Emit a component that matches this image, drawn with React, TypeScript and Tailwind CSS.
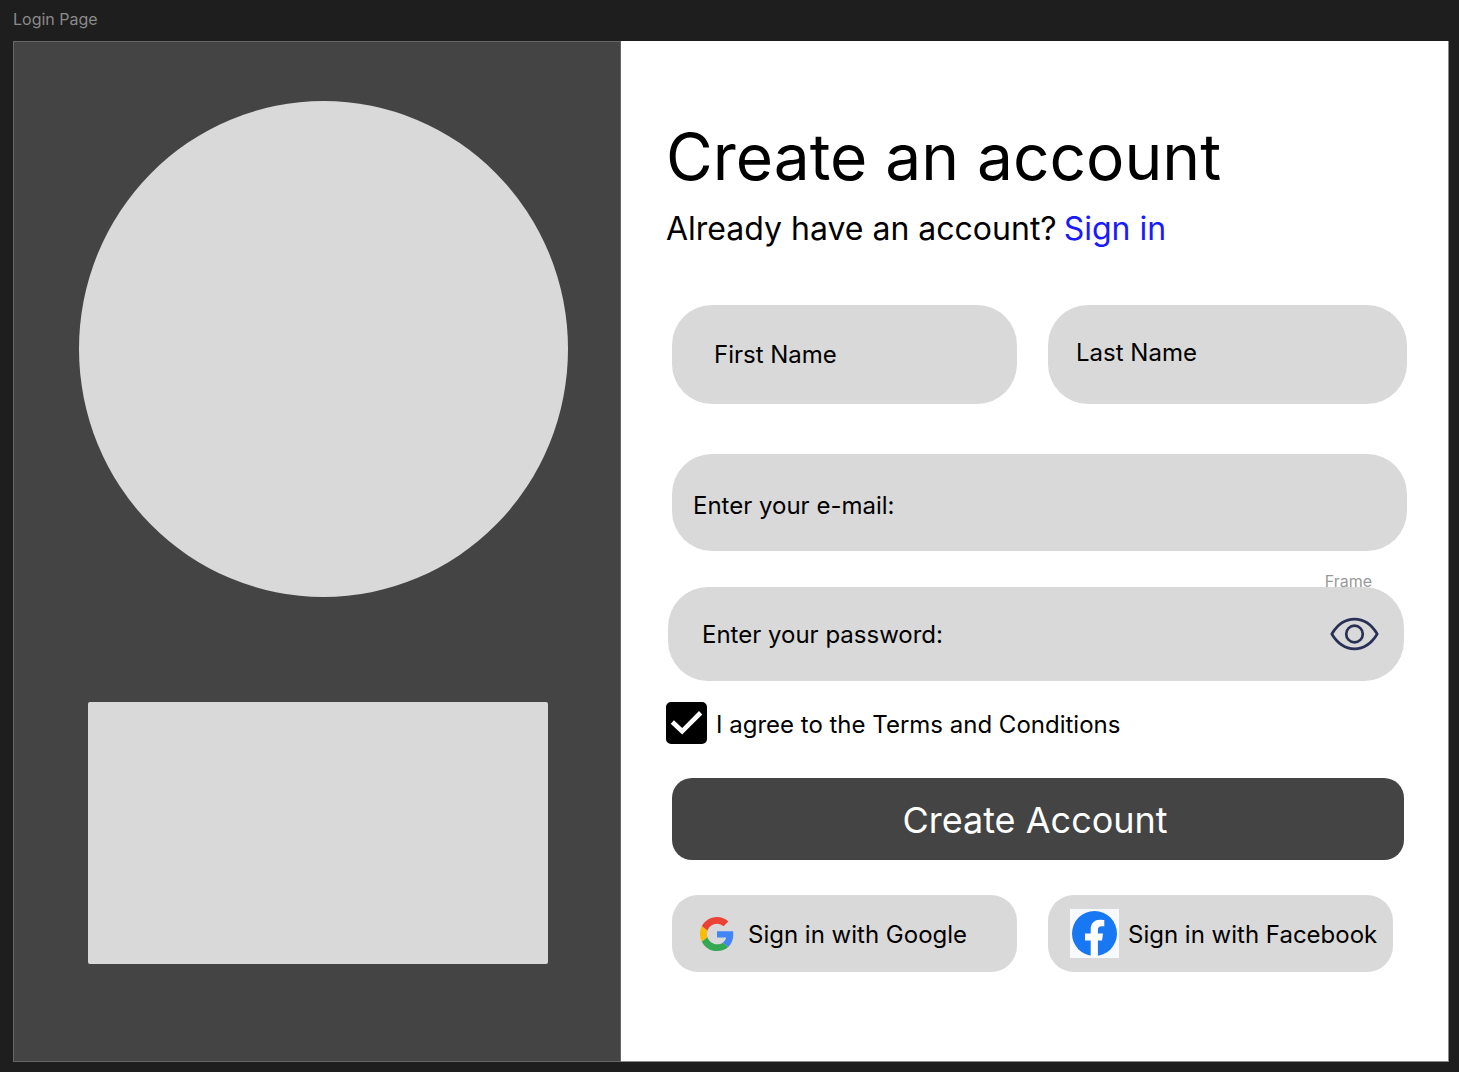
export default function App() {
  return (
    <div className="min-h-screen bg-[#1e1e1e] pl-[13px] pr-[10px] pb-[10px] font-['Inter',sans-serif] text-black">
      <header className="h-[41px] pt-[7px] text-base text-[#8a8a8a]">Login Page</header>
      <main className="grid grid-cols-[minmax(0,608fr)_minmax(0,828fr)] bg-white">
        <aside className="flex flex-col items-start border border-[#666666] bg-[#444444] pt-[59px] pb-[97px]">
          <div className="ml-[65px] h-[496px] w-[489px] max-w-full rounded-[50%] bg-[#d9d9d9]" />
          <div className="mt-[105px] ml-[74px] h-[262px] w-[460px] max-w-full rounded-xs bg-[#d9d9d9]" />
        </aside>
        <form className="flex flex-col border-r border-b border-[#8a8a8a] pt-[76px] pr-[41px] pl-[45px]" onSubmit={(e) => e.preventDefault()}>
          <h1 className="text-[64px] leading-[80px]">Create an account</h1>
          <p className="mt-[12px] flex gap-[7px] text-[32px] leading-[40px]">
            <span>Already have an account?</span>
            <a href="#signin" className="text-[#1a1aff]">Sign in</a>
          </p>
          <div className="mt-[56px] ml-[6px] grid grid-cols-[minmax(0,345fr)_minmax(0,359fr)] gap-[31px]">
            <input aria-label="First Name" placeholder="First Name" className="h-[99px] rounded-[40px] bg-[#d9d9d9] px-[42px] text-2xl placeholder:text-black" />
            <input aria-label="Last Name" placeholder="Last Name" className="h-[99px] rounded-[40px] bg-[#d9d9d9] px-[28px] pb-[4px] text-2xl placeholder:text-black" />
          </div>
          <input type="email" aria-label="Enter your e-mail" placeholder="Enter your e-mail:" className="mt-[50px] ml-[6px] h-[97px] rounded-[40px] bg-[#d9d9d9] px-[21px] pt-[6px] text-2xl placeholder:text-black" />
          <div className="relative mt-[36px] ml-[2px] mr-[3px] flex h-[94px] items-center rounded-[40px] bg-[#d9d9d9] pl-[34px] pr-[25px]">
            <input type="password" aria-label="Enter your password" placeholder="Enter your password:" className="h-full min-w-0 flex-1 text-2xl placeholder:text-black" />
            <button type="button" aria-label="Show password">
              <svg width="49" height="34" viewBox="0 0 49 34" fill="none" stroke="#293056" strokeWidth="2.7" strokeLinejoin="round">
                <path d="M1.800 17C7.500 7.500 15 2.200 24.500 2.200S41.500 7.500 47.200 17C41.500 26.500 34 31.800 24.500 31.800S7.500 26.500 1.800 17Z" />
                <circle cx="24.500" cy="17" r="8.300" />
              </svg>
            </button>
            <span className="absolute -top-[18px] right-[32px] text-base text-[#999999]">Frame</span>
          </div>
          <label className="mt-[21px] flex items-center gap-[9px] text-2xl">
            <span className="relative h-[42px] w-[41px]">
              <input type="checkbox" defaultChecked className="peer size-full appearance-none rounded-[5px] border-4 border-black checked:bg-black" />
              <svg className="pointer-events-none absolute inset-0 hidden peer-checked:block" viewBox="0 0 42 42" fill="none" stroke="white" strokeWidth="4.800">
                <path d="M6.500 20.500L16.500 30L35.500 11" />
              </svg>
            </span>
            <span className="pt-[4px]">I agree to the Terms and Conditions</span>
          </label>
          <button className="mt-[34px] ml-[6px] mr-[3px] h-[82px] rounded-[20px] bg-[#444444] pt-[2px] pr-[6px] text-4xl text-white">Create Account</button>
          <div className="mt-[35px] ml-[6px] mr-[14px] grid grid-cols-2 gap-[31px]">
            <button type="button" className="flex h-[77px] items-center rounded-[26px] bg-[#d9d9d9] pl-[28px] text-2xl whitespace-nowrap">
              <svg className="mr-[14px] size-[34px] shrink-0" viewBox="0 0 48 48">
                <path fill="#EA4335" d="M24 9.500c3.540 0 6.710 1.220 9.210 3.600l6.850-6.850C35.900 2.380 30.470 0 24 0 14.620 0 6.510 5.380 2.560 13.220l7.980 6.190C12.430 13.720 17.740 9.500 24 9.500z" />
                <path fill="#4285F4" d="M46.980 24.550c0-1.570-.15-3.090-.38-4.550H24v9.020h12.940c-.58 2.960-2.260 5.480-4.780 7.180l7.730 6c4.510-4.180 7.090-10.360 7.090-17.650z" />
                <path fill="#FBBC05" d="M10.530 28.590c-.48-1.450-.76-2.990-.76-4.590s.27-3.140.76-4.590l-7.980-6.190C.92 16.460 0 20.120 0 24c0 3.880.92 7.540 2.560 10.780l7.970-6.190z" />
                <path fill="#34A853" d="M24 48c6.480 0 11.930-2.130 15.890-5.810l-7.730-6c-2.150 1.450-4.920 2.300-8.160 2.300-6.260 0-11.570-4.220-13.470-9.910l-7.980 6.190C6.510 42.620 14.620 48 24 48z" />
              </svg>
              <span className="pt-[2px]">Sign in with Google</span>
            </button>
            <button type="button" className="flex h-[77px] items-center rounded-[26px] bg-[#d9d9d9] pl-[22px] text-2xl whitespace-nowrap">
              <span className="mr-[9px] flex size-[49px] shrink-0 items-center justify-center bg-[#f8f9fc]">
                <svg className="size-[45px]" viewBox="0 0 45 45">
                  <circle cx="22.500" cy="22.500" r="22.500" fill="#1877F2" />
                  <path fill="white" d="M18.700 45V29.500H13V22.500H18.700V18.500C18.700 12 22.500 8.700 28 8.700C30 8.700 32.300 9.100 32.300 9.100V15.200H29.500C27 15.200 25.900 16.500 25.900 18.700V22.500H31L30 29.500H25.900V45Z" />
                </svg>
              </span>
              <span className="pt-[2px]">Sign in with Facebook</span>
            </button>
          </div>
        </form>
      </main>
    </div>
  )
}
